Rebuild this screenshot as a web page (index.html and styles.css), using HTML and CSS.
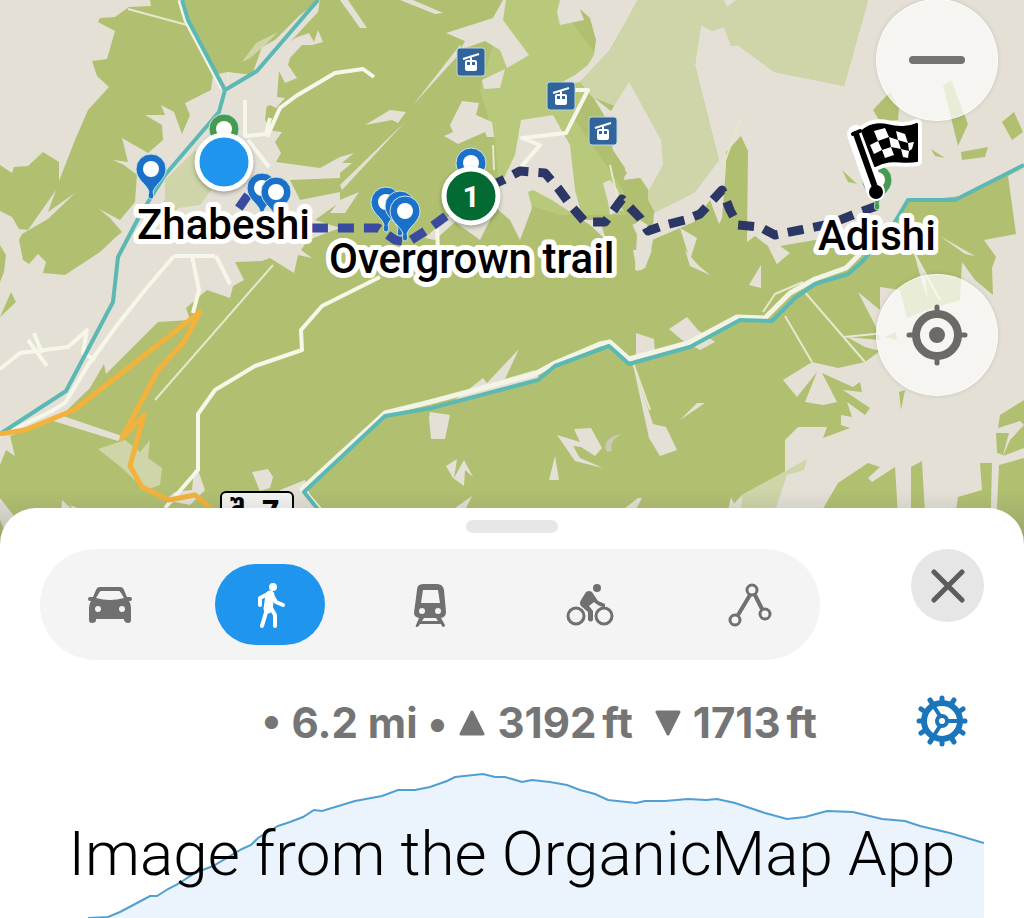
FILE: index.html
```
<!DOCTYPE html>
<html lang="en">
    <head>
        <meta charset="UTF-8" />
        <meta name="viewport" content="width=device-width, initial-scale=1.0" />
        <title>Zhabeshi to Adishi - Walking Route</title>
        <link rel="stylesheet" href="styles.css">
    </head>
    <body>
        <section class="map" aria-label="Route map">
            <svg class="mapCanvas" viewBox="0 0 1024 548">
                <defs>
                    <linearGradient id="sheetShadow" x1="0" y1="0" x2="0" y2="1">
                        <stop offset="0" stop-color="#555" stop-opacity="0" />
                        <stop offset="1" stop-color="#555" stop-opacity="0.3" />
                    </linearGradient>
                    <g id="pin">
                        <path d="M0 30C-3 30-3 26-2 23C-4 15-15 11-15 0A15 15 0 0 1 15 0C15 11 4 15 2 23C3 26 3 30 0 30Z" />
                        <circle r="8" fill="#fff" stroke="none" />
                    </g>
                    <g id="cableCar">
                        <rect x="-14" y="-14" width="28" height="28" rx="3" fill="#30649b" stroke="#b9d6df" />
                        <path d="M-8-3L8-8M0-6V0" stroke="#fff" stroke-width="2" />
                        <rect x="-6" y="-2" width="12" height="11" rx="2" fill="#fff" />
                        <path d="M-4 0H-1V3H-4ZM1 0H4V3H1Z" fill="#30649b" />
                    </g>
                </defs>

                <!-- Forest, meadows and bare ground -->
                <rect width="1024" height="548" fill="#b0c070" />
                <path class="scrub" d="M506 0H570V20L600 60L575 120L640 215H560L500 195L495 140L480 90Z" />
                <path class="ground" d="M0 0H150L151 6L129 7L115 17L100 18L98 22L115 31L107 59L92 61L97 76L109 87L88 110L75 140L59 181V162L43 152L28 166L14 167L12 173L0 165Z" />
                <path class="ground" d="M0 211L12 217L19 229L28 230L56 190L48 212L75 193L48 219L22 234L19 240L23 260L29 264L38 254L46 262L43 273L65 275L100 252L116 237L122 232L110 218L99 209L120 220L135 202L137 175L124 165L113 160L128 162L122 138L148 153L163 140L162 125L145 115L165 115L161 105L174 112L182 134L190 115L185 103L211 90L213 75L228 72L252 75L262 47L275 40L300 15L320 0L318 12L290 42L295 38L309 33L314 42L318 30L323 42L312 45L302 45L290 58L288 65L297 78L285 83L279 71L277 97L285 98L276 108L270 105L260 110L252 111L255 102L270 78L265 120L273 131L282 132L275 142L281 153L276 162L320 168L340 157V178L290 180L300 200L340 192V202L315 220L340 228L308 240L301 250L312 258L298 255L294 273L270 258L262 261L235 262L240 272L244 280L233 286L230 298L207 290L186 308L190 320L158 322L106 374L104 364L90 388L60 417L10 436L15 456L6 450L0 465Z" />
                <path class="forest" d="M0 245L6 255L4 272L0 282ZM11 292L16 302L0 317ZM190 196L170 215L152 225L165 200L185 175L197 178Z" />
                <path class="meadow" d="M165 180L195 150L215 185L200 205L165 210ZM242 62L256 43L278 32L262 48L250 58Z" />
                <path class="ground" d="M340 0H348L367 28H360ZM400 0H413L443 13L435 14ZM503 0L493 18L446 33L465 41L460 50L485 41L500 50L507 68L529 55L503 20L506 0ZM482 80L505 69L500 88L484 89ZM462 101L479 103L476 115L492 122L494 137L487 137L485 132L458 144L444 136L453 132L450 125ZM365 125L390 110L406 112L398 123L392 120ZM340 157L354 153L342 163L352 163L340 173ZM340 200L359 192L345 213H330ZM413 105L460 45L463 50ZM340 185L405 122L342 190Z" />
                <path class="ground" d="M560 0L557 12L560 25L584 20L580 9L590 18L596 40L594 55L588 65L575 75L553 87L580 82L610 50L638 0ZM521 120L553 115L570 145L575 190L583 220L600 220L606 240L590 225L552 200L533 190L528 192L532 208L520 240L510 220L496 208L480 240L455 222L435 240L425 238L450 215L503 180L515 155ZM610 180L618 190L622 210L640 220L655 230L650 255L642 270L635 270L637 235L625 208L610 215L608 202L603 183Z" />
                <path class="meadow" d="M638 0H868L866 8L844 86L774 72L738 45L731 46L724 27L712 31L701 25L695 65L719 160L695 192L680 200L655 213L640 185L630 110L612 105L592 97L580 82L610 50Z" />
                <path class="ground" d="M593 97L611 111L629 82L661 140L663 165L649 190L641 178L624 180L625 168L613 150L604 115Z" />
                <path class="forest" d="M612 153L627 173L621 181ZM626 180L640 178L648 190V215L633 225L622 208Z" />
                <path class="ground" d="M868 0H1024V168L960 196L908 202L890 225L865 240L840 248L815 240L780 246L790 253L777 264L768 246L755 236L747 242L748 151L741 136L726 152L726 166L722 218L719 224L710 200L694 222L680 228L652 240L654 213L680 200L695 192L719 160L695 65L701 25L712 31L724 27L731 46L738 45L774 72L844 86L866 8ZM680 228L697 238L690 260ZM724 0H736L727 7Z" />
                <path class="ground" d="M1024 168L1008 176L1016 234L984 240L996 257L992 268L993 295L975 280L962 262L960 300L927 310L907 318L900 290L880 287L880 310L858 292L875 325L880 340L847 337L865 347L880 351L865 362L838 368L812 362L783 380L797 397L817 372L805 402L823 405L837 402L822 373L853 387L860 382L862 392L843 390L870 408L865 415L847 402L852 417L841 415V425L850 428L823 438L827 427L798 427L785 440V472L742 495L730 508L738 512L731 497L720 548H800L838 483L868 463L880 467L868 478L872 482L895 467L900 548H911V467L922 461L927 548H950L958 497L982 490L980 463H992L990 548H995L999 465L1024 458V448L1003 456L1010 440L1024 425L1020 421L998 428L1000 415L1024 400ZM770 250L787 253L777 264ZM761 265L749 285L761 288ZM685 250L698 265L710 275L690 266ZM912 245L925 275L928 300L920 275ZM940 236L975 256L965 254Z" />
                <path class="forest" d="M873 110L890 92L899 108L898 120L880 122ZM943 85L951 80L968 124L958 146ZM961 152L988 147L985 157L962 160ZM1002 122L1014 112L1023 132L1012 140ZM931 149L945 158L935 156ZM842 170L857 184L848 182ZM905 390L901 410L899 392ZM996 433H1009L1003 455L997 453ZM885 337L896 332L897 340Z" />
                <path class="meadow" d="M742 495L807 459L804 470L787 475L772 520L740 530ZM125 440L140 452L150 440L148 458L162 468L160 485L145 490L122 468L98 449Z" />
                <path class="ground" d="M636 333L654 339L655 355L636 358ZM669 329L687 317L698 330L715 342L700 350L682 340ZM430 412L450 415L445 439H431L429 418ZM455 400L483 378L487 383L519 349L505 379L535 370L540 380L440 408ZM557 435L580 442L574 429L591 428L602 448L595 456L581 447L573 446L580 458L603 468L575 461ZM632 360L653 424L666 427L677 450L660 456L649 438ZM446 466L457 459L454 478L464 460L473 477L465 470L464 486L453 478ZM555 456L559 480H549ZM633 250H652L645 268L637 271ZM252 472L268 469L273 477L270 488L260 491ZM280 490L305 480L310 495L325 520H300ZM50 420L60 415L122 436L118 441ZM194 470H198L205 490L190 505L165 500L175 492L192 490ZM680 420L697 403H705ZM0 498L25 530L12 548L0 520ZM62 500L75 512L70 505L95 515L60 530ZM625 508L638 498L642 498L630 520ZM455 508L472 496L465 510Z" />
                <path d="M607 452C602 441 611 436 621 434C613 440 610 443 612 451Z" fill="#cbc8b4" />

                <!-- Tracks -->
                <g class="track">
                    <path d="M340 297L322 306L301 330L302 350L255 366L215 390L198 414V470L165 508M340 297L380 277M267 137L280 108L296 96L335 73L363 69L374 77" />
                    <path d="M174 256L145 290L118 324L88 365L65 403L48 413L0 436M192 256L199 290L193 313M216 256L230 284M0 369L20 353L68 347L87 330L83 353L95 360M28 340L47 366M34 333L42 353M245 100V136L266 134L270 118M248 140L269 167M174 256H215" />
                    <path d="M575 90H588L566 133L522 138L540 145L521 167M437 222L438 255" />
                </g>
                <path class="path" d="M128 9L187 25M228 72V90L222 94M155 400L273 265M785 316L812 362M803 290L865 362M763 312L775 294L803 282M844 337L885 333M940 300L907 240M610 165L620 210M723 166L740 120M493 145L494 170M632 360L650 410" />

                <!-- Rivers -->
                <path class="riverBank" d="M320 510L302 489L385 413L430 402L535 374L555 363L600 344L610 342L629 359L688 343L737 317L765 318L790 293L815 279L846 268L860 254M180 0L186 20L222 88" />
                <path class="river" d="M182 0L188 20L225 90L257 71L318 0M225 90L219 112L165 175L140 215L118 257L113 302L66 391L0 434M1024 165L955 200H908L895 222L862 262L848 274L815 284L795 298L772 321L740 320L690 347L629 364L609 346L555 366L538 380L432 408L385 416L304 492L320 512" />

                <!-- Main road -->
                <path class="road" d="M0 434L25 430L74 410L200 312L184 342L158 370L122 438L144 415L130 466L142 487L169 500L195 495L215 512" />

                <g class="shield">
                    <rect x="221" y="492" width="72" height="40" rx="5" />
                    <text x="230" y="521">შ</text>
                    <text x="261" y="521">7</text>
                </g>

                <!-- Route -->
                <path class="route routeStart" d="M248 195L236 212L250 228H378L395 240L408 242L430 228L450 213" />
                <path class="route" d="M490 186L503 180L520 171L545 173L558 188L572 207L585 222L605 222L622 199L640 218L648 231L665 225L685 220L700 214L722 190L730 210L738 225L760 227L775 235L800 230L830 224L860 212L877 206" />

                <g class="cableCars">
                    <use href="#cableCar" x="471" y="62" />
                    <use href="#cableCar" x="561" y="96" />
                    <use href="#cableCar" x="603" y="131" />
                </g>

                <g class="pins">
                    <use href="#pin" x="151" y="169" />
                    <use href="#pin" x="262" y="188" />
                    <use href="#pin" x="276" y="192" />
                    <use href="#pin" x="386" y="202" />
                    <use href="#pin" x="400" y="206" />
                    <use href="#pin" x="405" y="211" />
                    <use href="#pin" x="471" y="163" />
                    <use href="#pin" x="224" y="129" class="pinGreen" />
                    <use href="#pin" x="877" y="180" class="pinGreen" />
                </g>

                <g class="stops">
                    <circle cx="224" cy="162" r="27" fill="#2095ee" />
                    <circle cx="471" cy="196" r="27" fill="#046a33" />
                    <text x="471" y="207">1</text>
                </g>

                <!-- Finish flag -->
                <g class="flagOutline">
                    <path d="M856 134L876 192" />
                    <path d="M862 131C881 115 895 134 917 124V161C900 164 893 157 875 166Z" />
                </g>
                <path d="M856 134L876 190" stroke="#000" stroke-width="6" stroke-linecap="round" />
                <path d="M853 134L860 131" stroke="#000" stroke-width="4" stroke-linecap="round" />
                <circle cx="876" cy="192" r="7" />
                <path d="M862 131C881 115 895 134 917 124V161C900 164 893 157 875 166Z" stroke="#000" stroke-width="2" stroke-linejoin="round" />
                <path d="M874 131L885 128L889 137L878 141ZM889 137L898 140L901 149L891 147ZM896 131L905 134L908 143L898 140ZM870 145L878 141L882 150L874 154ZM882 150L891 147L894 155L885 158ZM908 143L914 142L912 149L909 151ZM901 149L909 151L908 158L903 157Z" fill="#fff" />

                <g class="places">
                    <text x="137" y="239">Zhabeshi</text>
                    <text x="329" y="273">Overgrown trail</text>
                    <text x="818" y="250">Adishi</text>
                </g>

                <rect y="490" width="1024" height="58" fill="url(#sheetShadow)" />
            </svg>

            <div class="mapControls">
                <button aria-label="Zoom out">
                    <svg width="60" height="60" viewBox="0 0 60 60">
                        <path d="M6 30H54" stroke="#75726f" stroke-width="8" stroke-linecap="round" />
                    </svg>
                </button>
                <button aria-label="My location">
                    <svg class="outline" width="62" height="62" viewBox="0 0 62 62">
                        <circle cx="31" cy="31" r="21" stroke-width="8" />
                        <circle cx="31" cy="31" r="4" stroke-width="8" />
                        <path d="M31 3V9M31 53V59M3 31H9M53 31H59" stroke-width="5" stroke-linecap="round" />
                    </svg>
                </button>
            </div>
        </section>

        <main class="sheet">
            <div class="grabber"></div>

            <header class="sheetHeader">
                <nav class="modes" aria-label="Route type">
                    <button aria-label="Drive">
                        <svg width="44" height="44" viewBox="0 0 44 44">
                            <path d="M12 4H32Q35 4 36 7L39 14H42Q44 14 44 16T42 18L41 18Q43 21 43 25V37Q43 40 40 40T36 37V36H8V37Q8 40 4 40Q1 40 1 37V25Q1 21 3 18H2Q0 18 0 16T2 14H5L8 7Q9 4 12 4ZM13 8Q12 8 11 10L8 15Q22 19 36 15L33 10Q32 8 31 8ZM10 23A3 3 0 1 0 10 29A3 3 0 1 0 10 23ZM34 23A3 3 0 1 0 34 29A3 3 0 1 0 34 23Z" fill-rule="evenodd" />
                        </svg>
                    </button>
                    <button class="active" aria-label="Walk" aria-pressed="true">
                        <svg width="44" height="48" viewBox="0 0 44 48">
                            <circle cx="25" cy="6" r="4" />
                            <path d="M22 14L20 28" stroke="currentColor" stroke-width="9" stroke-linecap="round" />
                            <path d="M20 13L12 17V24M25 16L28 21L35 24M19 28L14 45M23 27L27 34V45" fill="none" stroke="currentColor" stroke-width="4" stroke-linecap="round" stroke-linejoin="round" />
                        </svg>
                    </button>
                    <button aria-label="Public transport">
                        <svg width="34" height="44" viewBox="0 0 34 44">
                            <path d="M10 1H24Q30 1 31 7L33 29Q33 34 28 35L32 42Q32 44 30 44Q29 44 28 41H7Q6 44 4 44Q2 44 3 42L6 35Q1 34 1 30L4 7Q4 1 10 1ZM10 7L8 20H27L25 7ZM9 25A3 3 0 1 0 9 31A3 3 0 1 0 9 25ZM25 25A3 3 0 1 0 25 31A3 3 0 1 0 25 25ZM11 35L9 38H25L23 35Z" fill-rule="evenodd" />
                        </svg>
                    </button>
                    <button aria-label="Cycle">
                        <svg width="48" height="44" viewBox="0 0 48 44">
                            <circle cx="31" cy="5" r="4" />
                            <path d="M20 9Q23 7 26 9L32 18L39 21V24Q33 24 28 19L23 23L27 28V37Q25 40 22 37V29L15 23Q13 20 15 17Z" />
                            <g fill="none" stroke="currentColor" stroke-width="3">
                                <circle cx="10" cy="33" r="8" />
                                <circle cx="38" cy="33" r="8" />
                            </g>
                        </svg>
                    </button>
                    <button aria-label="Ruler">
                        <svg class="outline" width="44" height="44" viewBox="0 0 44 44">
                            <circle cx="24" cy="7" r="5" stroke-width="3" />
                            <circle cx="7" cy="37" r="5" stroke-width="3" />
                            <circle cx="37" cy="31" r="5" stroke-width="3" />
                            <path d="M22 12L10 32M27 12L34 26" stroke-width="4" />
                        </svg>
                    </button>
                </nav>
                <button class="close" aria-label="Close">
                    <svg width="34" height="34" viewBox="0 0 34 34">
                        <path d="M3 3L31 31M31 3L3 31" stroke="#5c5c5c" stroke-width="5" stroke-linecap="round" />
                    </svg>
                </button>
            </header>

            <section class="summary">
                <p class="stats">
                    <span>• 6.2 mi •</span>
                    <svg width="26" height="26" viewBox="0 0 26 26"><path d="M13 2L24 24H2Z" stroke="currentColor" stroke-width="3" stroke-linejoin="round" /></svg>
                    <span>3192<span class="unit">ft</span></span>
                    <svg class="descent" width="26" height="26" viewBox="0 0 26 26"><path d="M2 2H24L13 24Z" stroke="currentColor" stroke-width="3" stroke-linejoin="round" /></svg>
                    <span>1713<span class="unit">ft</span></span>
                </p>
                <button class="settings" aria-label="Route settings">
                    <svg class="outline" width="52" height="52" viewBox="0 0 52 52">
                        <circle cx="26" cy="26" r="18" stroke-width="6" />
                        <circle cx="26" cy="26" r="5" stroke-width="4" />
                        <path d="M31 26H44M24 21L17 10M24 31L17 42" stroke-width="4" />
                        <path d="M26 3V6M26 49V46M3 26H6M49 26H46M14 5L16 8M38 5L36 8M5 14L8 16M47 14L44 16M38 47L36 44M14 47L16 44M47 38L44 36M5 38L8 36" stroke-width="5" stroke-linecap="round" />
                    </svg>
                </button>
            </section>

            <section class="elevation">
                <svg class="profile" viewBox="0 0 944 148">
                    <path d="M48 148L68 147L80 142L97 133L110 126H117L128 119L138 114L155 103L173 96L202 79L211 75L218 68L238 56L250 52L263 47L274 40L282 41L315 31L342 26L358 20H375L390 17L407 11L415 7L443 4L455 7H465L472 9L482 12L492 10L510 12L527 15L540 20L555 24L568 30L596 33L605 31H625L648 29L666 30L677 29L695 33L725 43L747 49L765 47L787 41L813 42L842 49L865 51L880 56L910 63L944 73V148Z" fill="#ebf3fd" />
                    <path d="M48 148L68 147L80 142L97 133L110 126H117L128 119L138 114L155 103L173 96L202 79L211 75L218 68L238 56L250 52L263 47L274 40L282 41L315 31L342 26L358 20H375L390 17L407 11L415 7L443 4L455 7H465L472 9L482 12L492 10L510 12L527 15L540 20L555 24L568 30L596 33L605 31H625L648 29L666 30L677 29L695 33L725 43L747 49L765 47L787 41L813 42L842 49L865 51L880 56L910 63L944 73" fill="none" stroke="#4f9fd3" stroke-width="2" />
                </svg>
                <p class="caption">Image from the OrganicMap App</p>
            </section>
        </main>
    </body>
</html>
```
FILE: styles.css
```
body {
    margin: 0;
    background-color: #fff;
    color: #757575;
    font-family: Inter, "Liberation Sans", sans-serif;
}

button {
    display: flex;
    align-items: center;
    justify-content: center;
    margin: 0;
    padding: 0;
    border: 0;
    background: none;
    color: inherit;
    cursor: pointer;
}

svg {
    display: block;
    fill: currentColor;
}

.outline {
    fill: none;
    stroke: currentColor;
}

p {
    margin: 0;
}

.map {
    position: relative;
    overflow: hidden;
}

.mapCanvas {
    width: 100%;
    height: auto;
    color: #000;
}

.ground {
    fill: #e4e0d6;
}

.forest {
    fill: #b0c070;
}

.scrub {
    fill: #b9c97b;
}

.meadow {
    fill: #cfd5a8;
}

.track,
.path,
.river,
.riverBank,
.road,
.route {
    fill: none;
    stroke-linejoin: round;
}

.track {
    stroke: #f6f6e9;
    stroke-width: 4;
}

.path {
    stroke: #e5e8cb;
    stroke-width: 2;
}

.river {
    stroke: #5cb8b2;
    stroke-width: 4;
}

.riverBank {
    stroke: #f3f3e6;
    stroke-width: 5;
}

.road {
    stroke: #f3b23c;
    stroke-width: 5;
}

.route {
    stroke: #2d3765;
    stroke-width: 9;
    stroke-dasharray: 16 10;
}

.routeStart {
    stroke: #3a4a9f;
}

.shield rect {
    fill: #f4f4f2;
    stroke: #000;
    stroke-width: 2;
}

.shield text {
    font: bold 28px "DejaVu Sans", sans-serif;
}

.pins {
    fill: #1b70ca;
    stroke: #c9e6e4;
    stroke-width: 1;
}

.pinGreen {
    fill: #479a50;
}

.stops circle {
    stroke: #fff;
    stroke-width: 5;
    filter: drop-shadow(0 2px 2px rgba(0, 0, 0, 0.3));
}

.stops text {
    fill: #fff;
    font: bold 30px Roboto, sans-serif;
    text-anchor: middle;
}

.flagOutline {
    fill: #fff;
    stroke: #fff;
    stroke-width: 10;
    stroke-linecap: round;
    stroke-linejoin: round;
}

.flagOutline path:first-child {
    stroke-width: 18;
}

.places text {
    fill: #000;
    stroke: #fff;
    stroke-width: 10;
    stroke-linejoin: round;
    paint-order: stroke;
    font: 500 42px Roboto, sans-serif;
}

.mapControls {
    position: absolute;
    top: -1px;
    right: 26px;
    display: flex;
    flex-direction: column;
    gap: 153px;
}

.mapControls button {
    width: 122px;
    height: 122px;
    border: 1px solid rgba(255, 255, 255, 0.6);
    border-radius: 50%;
    background-color: rgba(252, 252, 250, 0.75);
    box-shadow: 0 0 5px rgba(0, 0, 0, 0.12);
    color: #6b6a66;
}

.sheet {
    position: relative;
    margin-top: -40px;
    padding: 12px 40px 0;
    border-radius: 36px 36px 0 0;
    background-color: #fff;
}

.grabber {
    width: 92px;
    height: 13px;
    margin: 0 auto 16px;
    border-radius: 7px;
    background-color: #e6e7e8;
}

.sheetHeader {
    display: flex;
    align-items: flex-start;
    gap: 91px;
}

.modes {
    flex: 1;
    display: flex;
    justify-content: space-between;
    padding: 15px;
    border-radius: 56px;
    background-color: #f4f4f4;
}

.modes button {
    width: 110px;
    height: 81px;
    border-radius: 41px;
    color: #707070;
}

.modes .active {
    background-color: #2095ee;
    color: #fff;
}

.close {
    width: 73px;
    height: 73px;
    border-radius: 50%;
    background-color: #e6e6e6;
}

.summary {
    display: flex;
    align-items: center;
    justify-content: flex-end;
    gap: 99px;
    padding: 35px 16px 23px 0;
}

.stats {
    display: flex;
    align-items: center;
    gap: 12px;
    padding-top: 4px;
    font-size: 42px;
    font-weight: 700;
    line-height: 48px;
    white-space: nowrap;
}

.descent {
    margin-left: 10px;
}

.unit {
    margin-left: 6px;
}

.settings {
    color: #1b75bb;
}

.elevation {
    display: grid;
}

.profile,
.caption {
    grid-area: 1 / 1;
}

.profile {
    width: 100%;
    height: auto;
}

.caption {
    align-self: center;
    padding-top: 20px;
    color: #000;
    font-family: Roboto, sans-serif;
    font-size: 62px;
    font-weight: 300;
    line-height: 80px;
    text-align: center;
    white-space: nowrap;
}
```
